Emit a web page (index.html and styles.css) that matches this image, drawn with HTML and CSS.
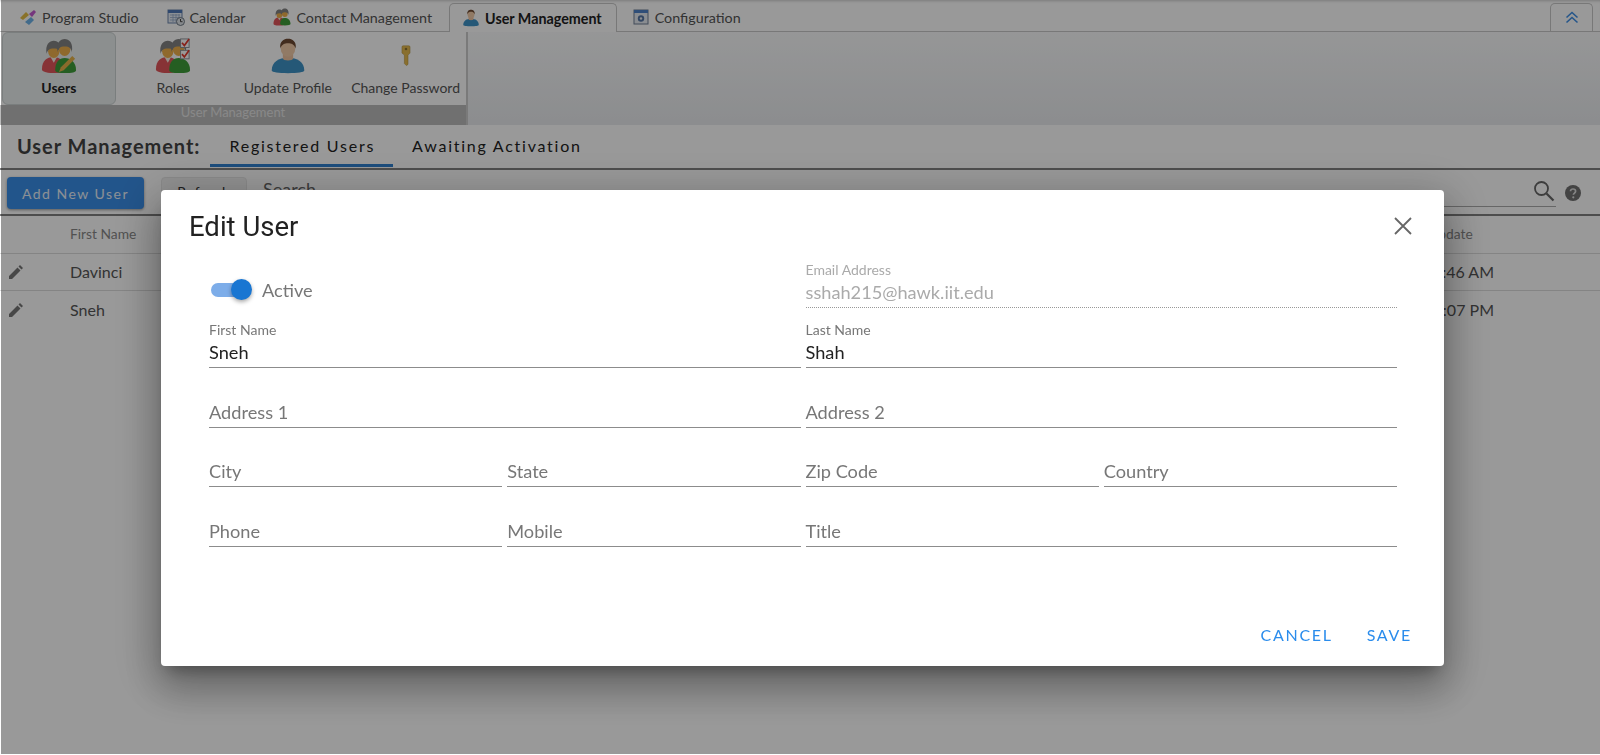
FILE: index.html
```html
<!DOCTYPE html>
<html lang="en">
<head>
<meta charset="utf-8">
<title>User Management</title>
<link rel="stylesheet" href="styles.css">
</head>
<body>
<svg class="defs" width="0" height="0" aria-hidden="true">
  <defs>
    <g id="person-red">
      <path d="M0 33c0-9 5-13 12-13s12 4 12 13c0 2-3 4-12 4S0 35 0 33z" fill="#e2565a"/>
      <path d="M9 20l3.500 6 3.500-6z" fill="#f7f2e8"/>
      <ellipse cx="12.500" cy="14" rx="6" ry="7" fill="#eeb04c"/>
      <path d="M5 17C3 7 8 3 12.500 3S22 7 20 17c-.5-4-2.500-6-7.500-6s-7 2-7.500 6z" fill="#828282"/>
    </g>
    <g id="person-green">
      <path d="M14 34c0-9 4-13 10-13s12 4 12 13c0 2-4 3-12 3-6 0-10-1-10-3z" fill="#3f9d3a"/>
      <ellipse cx="24" cy="12" rx="6" ry="7" fill="#eeb04c"/>
      <path d="M16.500 15C14.500 5 19.500 1 24 1s9.500 4 7.500 14c-.5-4-2.500-6-7.500-6s-7 2-7.500 6z" fill="#828282"/>
    </g>
    <g id="person-blue">
      <path d="M3 38c0-10 8-15 19-15s19 5 19 15c0 2-8 3-19 3S3 40 3 38z" fill="#3f93c7"/>
      <path d="M16 18h12v6c0 3-12 3-12 0z" fill="#eec3a0"/>
      <ellipse cx="22" cy="12" rx="8.500" ry="10" fill="#f2cba8"/>
      <path d="M13 12c-1-8 4-11 9-11s10 3 9 11c-2-5-5-6-9-6s-7 1-9 6z" fill="#6e4a32"/>
    </g>
    <g id="check-box">
      <rect x="1" y="1" width="9" height="9" fill="#fff" stroke="#8a8f95"/>
      <path d="M2.500 5l2.500 3 5-7" fill="none" stroke="#e23a2e" stroke-width="1.800"/>
    </g>
  </defs>
</svg>

<div class="page">
  <nav class="tabbar">
    <div class="tab">
      <svg class="tab-icon" viewBox="0 0 18 18"><path d="M1 10l6-6 3 3-6 5z" fill="#e5bf46"/><path d="M10 6l5-4 2 2-4 5z" fill="#c45bd0"/><path d="M6 14l6-5 3 3-5 5z" fill="#6fb3e8"/></svg>
      <span>Program Studio</span>
    </div>
    <div class="tab">
      <svg class="tab-icon" viewBox="0 0 18 18"><rect x="1" y="2" width="14" height="13" fill="#e8eef7" stroke="#6c86ad"/><rect x="1" y="2" width="14" height="3" fill="#4f78b8"/><path d="M3 7h10M3 9.500h10M3 12h10M6 6v8M9 6v8M12 6v8" stroke="#8ea3c4" stroke-width=".7"/><circle cx="13.500" cy="13.500" r="4" fill="#dfe4ea" stroke="#6f7a86"/><path d="M13.500 11v2.700h2" fill="none" stroke="#444"/></svg>
      <span>Calendar</span>
    </div>
    <div class="tab">
      <svg class="tab-icon" viewBox="0 0 36 38"><use href="#person-red"/><use href="#person-green"/></svg>
      <span>Contact Management</span>
    </div>
    <div class="tab tab-active">
      <svg class="tab-icon" viewBox="0 0 44 42"><use href="#person-blue"/></svg>
      <span>User Management</span>
    </div>
    <div class="tab">
      <svg class="tab-icon" viewBox="0 0 18 18"><rect x="2" y="2" width="14" height="14" fill="#e6ebf2" stroke="#6e7f96"/><rect x="2" y="2" width="14" height="3" fill="#4f82c9"/><circle cx="9" cy="10.500" r="3.200" fill="#5677a6"/><circle cx="9" cy="10.500" r="1.200" fill="#e6ebf2"/></svg>
      <span>Configuration</span>
    </div>
    <div class="collapse-tab">
      <svg width="14" height="13" viewBox="0 0 14 13"><path d="M1.500 6.500L7 1.500l5.500 5M1.500 11.500L7 6.500l5.500 5" fill="none" stroke="#3f8fe6" stroke-width="1.600"/></svg>
    </div>
  </nav>

  <section class="ribbon">
    <div class="ribbon-group">
      <div class="ribbon-items">
        <div class="ribbon-item ribbon-item-on">
          <svg class="ribbon-icon" viewBox="0 0 36 38"><use href="#person-red"/><use href="#person-green"/><path d="M18 36l2-5 12-12 3 3-12 12z" fill="#e6b34a"/></svg>
          <span>Users</span>
        </div>
        <div class="ribbon-item">
          <svg class="ribbon-icon" viewBox="0 0 36 38"><use href="#person-red"/><use href="#person-green"/><use href="#check-box" x="25" y="0"/><use href="#check-box" x="25" y="12"/></svg>
          <span>Roles</span>
        </div>
        <div class="ribbon-item">
          <svg class="ribbon-icon" viewBox="0 0 44 42"><use href="#person-blue"/></svg>
          <span>Update Profile</span>
        </div>
        <div class="ribbon-item ribbon-item-last">
          <svg class="ribbon-icon key-icon" viewBox="0 0 14 26"><path d="M2 2.500Q2 1 3.500 1h7Q12 1 12 2.500V10l-2.500 2.500V24l-2 1.500L5 23V12.500L2 10z" fill="#e5b94e" stroke="#a98a35" stroke-width=".6"/><circle cx="7" cy="5" r="1.600" fill="#8a7232"/></svg>
          <span>Change Password</span>
        </div>
      </div>
      <div class="ribbon-caption">User Management</div>
    </div>
  </section>

  <header class="section-head">
    <h1>User Management:</h1>
    <div class="sub-tab sub-tab-on">Registered Users</div>
    <div class="sub-tab">Awaiting Activation</div>
  </header>

  <div class="toolbar">
    <button class="btn-primary" type="button">Add New User</button>
    <button class="btn-plain" type="button">Refresh</button>
    <div class="search">
      <span class="search-label">Search</span>
      <svg width="22" height="22" viewBox="0 0 22 22"><circle cx="8.500" cy="8.500" r="6.500" fill="none" stroke="#666" stroke-width="1.800"/><path d="M13.500 13.500L20.500 20.500" stroke="#666" stroke-width="2.200"/></svg>
    </div>
    <svg class="help" width="16" height="16" viewBox="0 0 16 16"><circle cx="8" cy="8" r="8" fill="#707070"/><path d="M5.500 6.300C5.500 4.800 6.600 4 8 4s2.600.8 2.600 2.200c0 1.800-2.200 1.900-2.200 3.600" fill="none" stroke="#ddd" stroke-width="1.700"/><circle cx="8.300" cy="12.300" r="1.100" fill="#ddd"/></svg>
  </div>

  <div class="grid-row grid-head">
    <div class="cell-edit"></div>
    <div class="cell-name">First Name</div>
    <div class="cell-date cell-date-head">Last Update</div>
  </div>
  <div class="grid-row">
    <div class="cell-edit"><svg width="14" height="14" viewBox="0 0 14 14"><path d="M0 14v-3L8.500 2.500l3 3L3 14zM9.500 1.500L11 0l3 3-1.500 1.500z" fill="#777"/></svg></div>
    <div class="cell-name">Davinci</div>
    <div class="cell-date">11:46 AM</div>
  </div>
  <div class="grid-row grid-row-last">
    <div class="cell-edit"><svg width="14" height="14" viewBox="0 0 14 14"><path d="M0 14v-3L8.500 2.500l3 3L3 14zM9.500 1.500L11 0l3 3-1.500 1.500z" fill="#777"/></svg></div>
    <div class="cell-name">Sneh</div>
    <div class="cell-date">10:07 PM</div>
  </div>
</div>

<div class="backdrop">
  <div class="dialog">
    <div class="dialog-head">
      <h2>Edit User</h2>
      <svg width="18" height="18" viewBox="0 0 18 18"><path d="M1 1l16 16M17 1L1 17" stroke="#666" stroke-width="1.800"/></svg>
    </div>
    <div class="form">
      <div class="field-wide switch-row">
        <div class="switch"><span class="switch-track"></span><span class="switch-thumb"></span></div>
        <span class="switch-label">Active</span>
      </div>
      <div class="field field-wide field-disabled">
        <label>Email Address</label>
        <div class="value">sshah215@hawk.iit.edu</div>
      </div>
      <div class="field field-wide"><label>First Name</label><div class="value">Sneh</div></div>
      <div class="field field-wide"><label>Last Name</label><div class="value">Shah</div></div>
      <div class="field field-wide field-empty"><div class="value">Address 1</div></div>
      <div class="field field-wide field-empty"><div class="value">Address 2</div></div>
      <div class="field field-empty"><div class="value">City</div></div>
      <div class="field field-empty"><div class="value">State</div></div>
      <div class="field field-empty"><div class="value">Zip Code</div></div>
      <div class="field field-empty"><div class="value">Country</div></div>
      <div class="field field-empty"><div class="value">Phone</div></div>
      <div class="field field-empty"><div class="value">Mobile</div></div>
      <div class="field field-wide field-empty"><div class="value">Title</div></div>
    </div>
    <div class="dialog-actions">
      <button type="button">CANCEL</button>
      <button type="button">SAVE</button>
    </div>
  </div>
</div>
</body>
</html>
```

FILE: styles.css
```css
* { box-sizing: border-box; }
html, body { height: 100%; }
body {
  margin: 0;
  overflow: hidden;
  background: #fff;
  color: #333;
  font-family: Lato, "Open Sans", sans-serif;
}
.defs { position: absolute; }

.tabbar {
  height: 32px;
  padding: 3px 7px 0 4px;
  display: flex;
  align-items: stretch;
  background: #fff;
  border-bottom: 1px solid #c8c8c8;
  box-shadow: inset 0 3px 3px -2px #ccc;
}
.tab {
  display: flex;
  align-items: center;
  gap: 5px;
  padding: 0 12px 0 15px;
  margin-right: 1px;
  font-size: 14.300px;
  color: #555;
  white-space: nowrap;
}
.tab-icon { width: 18px; height: 18px; flex: none; }
.tab-active {
  height: 29px;
  margin-left: 4px;
  margin-right: 0;
  padding: 0 14px 0 12px;
  color: #222;
  font-weight: 700;
  background: #fff;
  border: 1px solid #c8c8c8;
  border-bottom: 0;
  border-radius: 5px 5px 0 0;
}
.collapse-tab {
  margin-left: auto;
  width: 43px;
  display: flex;
  align-items: center;
  justify-content: center;
  border: 1px solid #c8c8c8;
  border-bottom: 0;
  border-radius: 5px 5px 0 0;
}

.ribbon {
  height: 93px;
  background: linear-gradient(#fafbfc, #e9ebee);
}
.ribbon-group {
  width: 468px;
  height: 93px;
  display: flex;
  flex-direction: column;
  border-right: 2px solid #ccc;
}
.ribbon-items {
  height: 73px;
  display: flex;
  padding-left: 2px;
  background: #fff;
}
.ribbon-item {
  width: 115px;
  display: flex;
  flex-direction: column;
  align-items: center;
  font-size: 14px;
  color: #555;
  white-space: nowrap;
  border: 1px solid transparent;
  border-radius: 6px;
  padding-top: 5px;
}
.ribbon-item-on {
  width: 114px;
  font-weight: 700;
  color: #222;
  background: #e9efef;
  border-color: #ccd2d2;
}
.ribbon-item-last { width: 121px; }
.ribbon-icon { width: 40px; height: 36px; margin-bottom: 5px; }
.key-icon { padding: 7px 0 8px; }
.ribbon-caption {
  flex: 1;
  background: #bbb;
  color: #e4e4e4;
  font-size: 13px;
  text-align: center;
  line-height: 15px;
}

.section-head {
  height: 45px;
  padding-left: 17px;
  display: flex;
  align-items: stretch;
  border-bottom: 2px solid #808080;
  background: #fff;
}
.section-head h1 {
  margin: 0 10px 0 0;
  font-size: 20px;
  font-weight: 700;
  line-height: 42px;
  letter-spacing: .95px;
  color: #444;
}
.sub-tab {
  height: 42px;
  padding: 0 18px 0 19px;
  font-size: 16px;
  line-height: 42px;
  letter-spacing: 1.750px;
  color: #222;
  white-space: nowrap;
}
.sub-tab-on { border-bottom: 3px solid #2f80d0; }

.toolbar {
  height: 46px;
  padding: 7px 19px 0 7px;
  display: flex;
  align-items: flex-start;
  border-bottom: 2px solid #808080;
}
.btn-primary {
  width: 137px;
  height: 32px;
  border: 0;
  border-radius: 4px;
  background: #3a8ee8;
  color: #e8f0f8;
  font: 14px Lato, sans-serif;
  letter-spacing: 1.500px;
  box-shadow: 0 1px 3px rgba(0,0,0,.4);
}
.btn-plain {
  width: 86px;
  height: 32px;
  margin-left: 17px;
  padding: 0 0 3px;
  border: 1px solid #e6e6e6;
  border-radius: 4px;
  background: #f2f2f2;
  color: #333;
  font: 14px Lato, sans-serif;
  letter-spacing: 1px;
}
.search {
  flex: 1;
  height: 30px;
  margin-left: 16px;
  display: flex;
  align-items: flex-start;
  justify-content: space-between;
  padding: 3px 1px 0 0;
  border-bottom: 1px solid #aaa;
}
.search-label { font-size: 18px; color: #666; line-height: 18px; }
.help { margin: 8px 0 0 9px; }

.grid-row {
  height: 37.500px;
  padding-bottom: 1px;
  display: flex;
  align-items: center;
  border-bottom: 1px solid #ddd;
  font-size: 16px;
  color: #555;
}
.grid-row-last { border-bottom: 0; }
.grid-head { font-size: 13.800px; color: #888; }
.cell-edit { width: 70px; padding: 3px 0 0 9px; }
.cell-name { flex: 1; }
.cell-date {
  width: 200px;
  padding-right: 106px;
  text-align: right;
  white-space: nowrap;
}
.cell-date-head { padding-right: 129px; }

.backdrop {
  position: fixed;
  inset: 0 0 1px 1px;
  padding: 190px 156px 0 160px;
  background: rgba(0,0,0,.4);
}
.dialog {
  height: 476px;
  background: #fff;
  border-radius: 4px;
  padding: 0 32px 0 28px;
  display: flex;
  flex-direction: column;
  box-shadow: 0 11px 15px -7px rgba(0,0,0,.3), 0 24px 38px 3px rgba(0,0,0,.2), 0 9px 46px 8px rgba(0,0,0,.2);
}
.dialog-head {
  height: 58px;
  flex: none;
  display: flex;
  align-items: center;
  justify-content: space-between;
  padding-top: 14px;
}
.dialog-head h2 {
  margin: 0;
  font: 400 27.500px Roboto, sans-serif;
  color: #222;
}
.form {
  margin: 0 15px 0 20px;
  display: grid;
  grid-template-columns: repeat(4, 1fr);
  grid-template-rows: 59.500px 60.500px;
  grid-auto-rows: 59.500px;
  column-gap: 5px;
}
.field-wide { grid-column: span 2; }
.field {
  display: flex;
  flex-direction: column;
  justify-content: flex-end;
  border-bottom: 1px solid #8c8c8c;
}
.field label {
  margin-bottom: 2px;
  font-size: 14px;
  line-height: 15px;
  color: #777;
}
.value {
  height: 28px;
  font-size: 18.200px;
  line-height: 26px;
  color: #222;
}
.field-empty .value { color: #777; }
.field-disabled { border-bottom: 1px dotted #999; }
.field-disabled label, .field-disabled .value { color: #aaa; }
.switch-row {
  display: flex;
  align-items: center;
  padding: 25px 0 0 2px;
  height: 59px;
}
.switch { position: relative; width: 43px; height: 22px; }
.switch-track {
  position: absolute;
  left: 0;
  top: 4px;
  width: 32px;
  height: 14px;
  border-radius: 7px;
  background: #7dade9;
}
.switch-thumb {
  position: absolute;
  left: 20px;
  top: 0;
  width: 21px;
  height: 21px;
  border-radius: 50%;
  background: #1976d2;
  box-shadow: 0 2px 4px rgba(0,0,0,.35);
}
.switch-label { margin-left: 8px; font-size: 18.200px; color: #777; }
.dialog-actions {
  margin-top: auto;
  height: 47px;
  display: flex;
  justify-content: flex-end;
  gap: 34px;
}
.dialog-actions button {
  border: 0;
  padding: 0;
  height: 30px;
  background: none;
  color: #2a8cec;
  font: 16px Lato, sans-serif;
  letter-spacing: 1.700px;
}
```
